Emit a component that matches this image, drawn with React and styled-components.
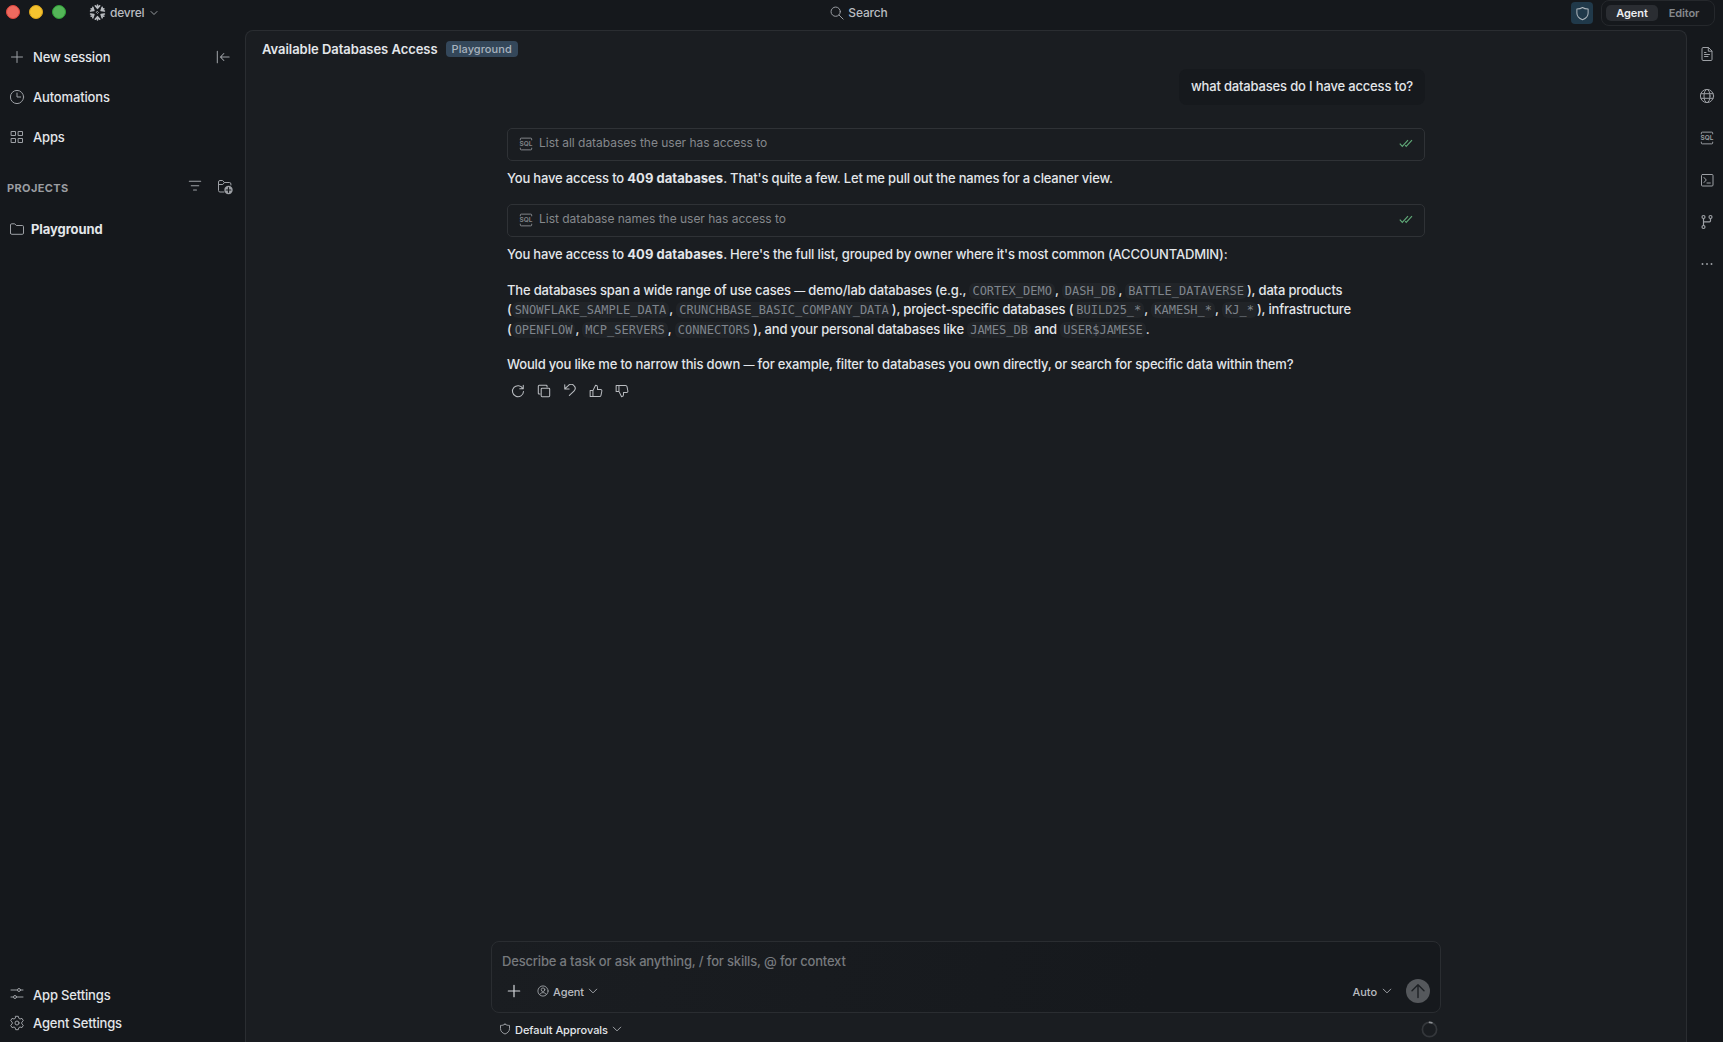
import React from 'react';
import styled, { createGlobalStyle } from 'styled-components';

const c = {
  chrome: '#15181c',
  panel: '#1a1d21',
  line: '#2a2d31',
  text: '#e3e6ea',
  soft: '#b9bcc0',
  icon: '#9da0a5',
  mute: '#85888c',
};

const Global = createGlobalStyle`
  * { box-sizing: border-box; }
  body {
    margin: 0;
    background: ${c.chrome};
    color: ${c.text};
    font-family: Inter, "Liberation Sans", sans-serif;
    font-size: 13px;
    overflow: hidden;
  }
  svg { display: block; flex: none; }
`;

const Window = styled.div`
  display: flex;
  flex-direction: column;
  width: 100vw;
  height: 100vh;
  background: ${c.chrome};
`;

const TitleBar = styled.header`
  display: grid;
  grid-template-columns: 1fr auto 1fr;
  align-items: start;
  height: 30px;
  flex: none;
`;

const TitleLeft = styled.div`
  display: flex;
  align-items: center;
  height: 25px;
  padding-left: 6px;
`;

const Lights = styled.div`
  display: flex;
  gap: 9px;
  margin: 0 23px 1px 0;
`;

const Light = styled.span`
  width: 14px;
  height: 14px;
  border-radius: 50%;
  background: ${p => p.$fill};
  border: 1px solid ${p => p.$edge};
`;

const Workspace = styled.button`
  display: flex;
  align-items: center;
  padding: 0;
  border: 0;
  background: none;
  color: ${c.soft};
  font: 500 12px/16px Inter, sans-serif;
  letter-spacing: -0.2px;
  span { margin: 0 6px 0 4px; }
`;

const Search = styled.div`
  display: flex;
  align-items: center;
  gap: 4px;
  height: 25px;
  padding-right: 5px;
  color: ${c.soft};
  font-size: 12px;
  font-weight: 500;
  letter-spacing: -0.15px;
  svg { color: ${c.icon}; }
`;

const TitleRight = styled.div`
  display: flex;
  justify-content: flex-end;
  gap: 8px;
  padding-right: 8px;
`;

const ShieldButton = styled.button`
  display: flex;
  align-items: center;
  justify-content: center;
  width: 22px;
  height: 22px;
  margin-top: 2px;
  padding: 0;
  border: 0;
  border-radius: 4px;
  background: #20394a;
  color: #aab3ba;
`;

const Toggle = styled.div`
  display: flex;
  width: 114px;
  height: 26px;
  padding: 4px;
  border: 1px solid #25282c;
  border-radius: 8px;
`;

const ToggleItem = styled.button`
  width: 52px;
  height: 16px;
  padding: 0;
  border: 0;
  border-radius: 5px;
  background: ${p => (p.$on ? '#2a2d32' : 'transparent')};
  color: ${p => (p.$on ? '#eceef1' : c.mute)};
  font: 600 11px/17px Inter, sans-serif;
  letter-spacing: -0.1px;
`;

const Body = styled.div`
  display: flex;
  flex: 1;
  min-height: 0;
`;

const Sidebar = styled.aside`
  display: flex;
  flex-direction: column;
  width: 245px;
  flex: none;
  padding: 7px 12px 5px 9px;
`;

const NavRow = styled.div`
  display: flex;
  align-items: center;
  gap: ${p => p.$gap || 8}px;
  height: ${p => p.$h || 40}px;
  color: ${c.icon};
`;

const NavLabel = styled.span`
  flex: 1;
  color: ${c.text};
  font-weight: ${p => (p.$bold ? 700 : 500)};
  letter-spacing: ${p => (p.$bold ? -0.08 : -0.16)}px;
  line-height: 18px;
`;

const CollapseSlot = styled.span`
  margin-right: 3px;
`;

const SectionRow = styled.div`
  display: flex;
  align-items: center;
  gap: 15px;
  height: 20px;
  margin: 20px 0 12px -2px;
  color: ${c.icon};
`;

const SectionTitle = styled.h2`
  flex: 1;
  margin: 2px 0 0;
  color: #9a9da1;
  font-size: 11px;
  font-weight: 700;
  letter-spacing: 0.38px;
`;

const Spacer = styled.div`
  flex: 1;
`;

const Panel = styled.main`
  display: flex;
  flex-direction: column;
  flex: 1;
  min-width: 0;
  border: 1px solid ${c.line};
  border-bottom: 0;
  border-radius: 8px 8px 0 0;
  background: ${c.panel};
`;

const PanelHeader = styled.div`
  display: flex;
  align-items: center;
  gap: 8px;
  height: 36px;
  flex: none;
  padding-left: 16px;
`;

const PanelTitle = styled.h1`
  margin: 0;
  color: ${c.text};
  font-size: 13px;
  font-weight: 600;
  letter-spacing: -0.04px;
`;

const Badge = styled.span`
  height: 16px;
  padding: 0 6px;
  border-radius: 4px;
  background: #34475a;
  color: #a9b3be;
  font-size: 11px;
  font-weight: 500;
  letter-spacing: 0.06px;
  line-height: 16px;
`;

const Thread = styled.section`
  display: flex;
  flex-direction: column;
  width: 918px;
  margin: 2px auto 0;
`;

const UserBubble = styled.div`
  align-self: flex-end;
  height: 36px;
  padding: 0 12px;
  border-radius: 8px;
  background: #16191d;
  font-weight: 500;
  letter-spacing: -0.17px;
  line-height: 35px;
  margin-bottom: 23px;
`;

const ToolCard = styled.div`
  display: flex;
  align-items: center;
  gap: 6px;
  height: 33px;
  padding: 0 11px;
  border: 1px solid #2f3236;
  border-radius: 5px;
  color: ${c.mute};
  font-size: 12px;
  letter-spacing: -0.02px;
  line-height: 16px;
`;

const ToolIcon = styled.span`
  margin-top: -1px;
`;

const ToolName = styled.span`
  flex: 1;
  margin-top: -3px;
`;

const CheckSlot = styled.span`
  color: #5fa777;
  margin-top: -3px;
`;

const Paragraph = styled.p`
  margin: ${p => p.$top}px 0 ${p => p.$bottom}px;
  white-space: nowrap;
  font-weight: 450;
  letter-spacing: -0.17px;
  line-height: 19.5px;
  strong {
    font-weight: 700;
    letter-spacing: 0.04px;
  }
`;

const Dash = styled.span`
  font-size: 11px;
  line-height: 1;
`;

const Code = styled.code`
  padding: 1px 3px;
  border-radius: 6px;
  background: #212428;
  color: #7f858d;
  font-family: "DejaVu Sans Mono", monospace;
  font-size: 12px;
  letter-spacing: 0;
  line-height: 1;
`;

const Actions = styled.div`
  display: flex;
  gap: 12px;
  margin: 9px 0 0 4px;
  color: ${c.soft};
`;

const Dock = styled.footer`
  width: 950px;
  margin: 0 auto;
  padding-bottom: 4px;
`;

const Composer = styled.div`
  height: 72px;
  padding: 11px 10px 0;
  border: 1px solid ${c.line};
  border-radius: 8px;
  background: linear-gradient(100deg, #1a1d21 0%, #16191d 70%);
`;

const Placeholder = styled.div`
  height: 18px;
  color: #76797d;
  font-weight: 450;
  letter-spacing: -0.17px;
  line-height: 16px;
`;

const ComposerBar = styled.div`
  display: flex;
  align-items: center;
  height: 24px;
  margin-top: 8px;
  color: #d2d5d9;
  padding: 0 0 0 5px;
`;

const Pick = styled.span`
  display: flex;
  align-items: center;
  gap: ${p => p.$gap || 4}px;
  margin: ${p => p.$m || 0};
  color: ${p => (p.$bright ? c.text : c.soft)};
  font-size: 11px;
  font-weight: 500;
  letter-spacing: -0.06px;
  line-height: 16px;
  svg { color: ${c.icon}; margin-bottom: 2px; }
`;

const Send = styled.button`
  display: flex;
  align-items: center;
  justify-content: center;
  width: 24px;
  height: 24px;
  margin-left: 14px;
  padding: 0;
  border: 0;
  border-radius: 50%;
  background: #55585c;
  color: #1d2024;
`;

const DockStatus = styled.div`
  display: flex;
  align-items: center;
  justify-content: space-between;
  height: 17px;
  margin-top: 8px;
  padding: 0 3px 0 8px;
`;

const Rail = styled.nav`
  display: flex;
  flex-direction: column;
  align-items: center;
  gap: 26px;
  width: 36px;
  flex: none;
  padding: 16px 0 0 4px;
  color: ${c.icon};
`;

const RailSlot = styled.span`
  display: flex;
  align-items: center;
  justify-content: center;
  width: 16px;
  height: 16px;
`;

function Icon({ s = 16, w = 1, children }) {
  return (
    <svg width={s} height={s} viewBox="0 0 16 16" fill="none" stroke="currentColor"
      strokeWidth={w} strokeLinecap="round" strokeLinejoin="round">{children}</svg>
  );
}

const Chevron = ({ s = 10 }) => <Icon s={s} w={1.6}><path d="M2 5l6 6 6-6" /></Icon>;
const Shield = ({ s = 16, w = 1.1 }) => (
  <Icon s={s} w={w}><path d="M8 1.6C9.8 2.9 11.8 3.2 14 3.2V7.5c0 3.5-2.3 5.8-6 7.2-3.7-1.4-6-3.7-6-7.2V3.2c2.2 0 4.2-.3 6-1.6z" /></Icon>
);

const SqlText = styled.text`
  font-family: Inter, sans-serif;
  font-size: 7.4px;
  font-weight: 600;
  letter-spacing: 0;
`;

const Sql = () => (
  <Icon s={14} w={1.1}>
    <path d="M1.500 3.300V2.300a1 1 0 0 1 1-1h11a1 1 0 0 1 1 1v1M1.500 12.700v1a1 1 0 0 0 1 1h11a1 1 0 0 0 1-1v-1" />
    <SqlText x="8" y="10.700" textAnchor="middle" fill="currentColor" stroke="none">SQL</SqlText>
  </Icon>
);

const Snowflake = () => (
  <svg width="17" height="17" viewBox="-8.5 -8.5 17 17" fill="none" stroke="currentColor" strokeWidth="1.6" strokeLinecap="round" strokeLinejoin="round">
    {[0, 60, 120, 180, 240, 300].map(a => (
      <path key={a} transform={`rotate(${a})`} d="M0-7.400V-4.200M-2.200-6.700L0-4.200 2.200-6.700" />
    ))}
    <path d="M0-1L1 0 0 1-1 0z" strokeWidth="0.8" />
  </svg>
);

const DoubleCheck = () => (
  <svg width="14" height="9" viewBox="0 0 14 9" fill="none" stroke="currentColor" strokeWidth="1.2">
    <path d="M.8 4.700l2.500 2.600L9 1.200M6.200 6.200l1 1.100L13 1.200" />
  </svg>
);

const Thumb = ({ down }) => (
  <Icon s={14} w={1.15}>
    <g transform={down ? 'matrix(1 0 0 -1 0 16)' : undefined}>
      <path d="M1.300 7.300h3.200v7H1.300zM4.500 7.600L7.500 1.400c1.500 0 2.200 1 2.200 2.200v2.700h3.600c1 0 1.600.8 1.400 1.700l-1 5c-.2.8-.8 1.300-1.600 1.300H4.500" />
    </g>
  </Icon>
);

const Bold = () => <strong>409 databases</strong>;

function App() {
  return (
    <Window>
      <Global />
      <TitleBar>
        <TitleLeft>
          <Lights>
            <Light $fill="#ee6a5f" $edge="#e0483e" />
            <Light $fill="#f5c32f" $edge="#dda61d" />
            <Light $fill="#54b658" $edge="#2fa037" />
          </Lights>
          <Workspace>
            <Snowflake />
            <span>devrel</span>
            <Chevron s={8} />
          </Workspace>
        </TitleLeft>
        <Search>
          <Icon s={14} w={1.1}><circle cx="6.500" cy="6.500" r="5.300" /><path d="M10.400 10.400l4.600 4.600" /></Icon>
          Search
        </Search>
        <TitleRight>
          <ShieldButton><Shield s={15} /></ShieldButton>
          <Toggle>
            <ToggleItem $on>Agent</ToggleItem>
            <ToggleItem>Editor</ToggleItem>
          </Toggle>
        </TitleRight>
      </TitleBar>

      <Body>
        <Sidebar>
          <NavRow>
            <Icon><path d="M8 2.500v11M2.500 8h11" /></Icon>
            <NavLabel>New session</NavLabel>
            <CollapseSlot>
              <Icon s={14} w={1.2}><path d="M1.500 1.500v13M15 8H5M9 4L5 8l4 4" /></Icon>
            </CollapseSlot>
          </NavRow>
          <NavRow>
            <Icon><circle cx="8" cy="8" r="6.600" /><path d="M8 4v4h3.700" /></Icon>
            <NavLabel>Automations</NavLabel>
          </NavRow>
          <NavRow>
            <Icon>
              <path d="M2.500 2.500h4v4h-4zM9.500 2.500h4v4h-4zM2.500 9.500h4v4h-4zM9.500 9.500h4v4h-4z" />
            </Icon>
            <NavLabel>Apps</NavLabel>
          </NavRow>
          <SectionRow>
            <SectionTitle>PROJECTS</SectionTitle>
            <Icon s={14} w={1.2}><path d="M1.500 1.500h13M3.700 6.500h8.600M6.300 11.500h3.400" /></Icon>
            <Icon>
              <path d="M7 13H3a1.500 1.500 0 0 1-1.500-1.500V3A1.500 1.500 0 0 1 3 1.500h2.600L7.400 3.500h5A1.500 1.500 0 0 1 13.900 5v1M1.500 5.500h4.300l1.600-2" />
              <circle cx="11.500" cy="11" r="4.200" fill="currentColor" stroke="none" />
              <path d="M11.500 8.700v4.600M9.200 11h4.600" stroke={c.chrome} strokeWidth="1.2" />
            </Icon>
          </SectionRow>
          <NavRow $gap={6}>
            <Icon><path d="M1.500 12.100V4a1.200 1.200 0 0 1 1.200-1.200h3l1.600 1.700h6a1.200 1.200 0 0 1 1.200 1.200v6.400a1.200 1.200 0 0 1-1.200 1.200H2.700a1.200 1.200 0 0 1-1.200-1.200z" /></Icon>
            <NavLabel $bold>Playground</NavLabel>
          </NavRow>
          <Spacer />
          <NavRow $h={28}>
            <Icon><path d="M2 3h6.500M11.500 3H14M2 10h2.500M7.500 10H14" /><circle cx="10" cy="3" r="1.500" /><circle cx="6" cy="10" r="1.500" /></Icon>
            <NavLabel>App Settings</NavLabel>
          </NavRow>
          <NavRow $h={28}>
            <Icon>
              <circle cx="8" cy="8" r="2" />
              <path d="M6.700 1.300h2.600l.5 2 1.200.7 2-.6 1.300 2.300-1.500 1.400v1.800l1.500 1.400-1.300 2.300-2-.6-1.200.7-.5 2H6.700l-.5-2-1.200-.7-2 .6-1.300-2.300 1.500-1.400V7.100L1.700 5.700 3 3.400l2 .6 1.200-.7z" />
            </Icon>
            <NavLabel>Agent Settings</NavLabel>
          </NavRow>
        </Sidebar>

        <Panel>
          <PanelHeader>
            <PanelTitle>Available Databases Access</PanelTitle>
            <Badge>Playground</Badge>
          </PanelHeader>

          <Thread>
            <UserBubble>what databases do I have access to?</UserBubble>
            <ToolCard>
              <ToolIcon><Sql /></ToolIcon>
              <ToolName>List all databases the user has access to</ToolName>
              <CheckSlot><DoubleCheck /></CheckSlot>
            </ToolCard>
            <Paragraph $top={7.5} $bottom={16}>
              You have access to <Bold />. That's quite a few. Let me pull out the names for a cleaner view.
            </Paragraph>
            <ToolCard>
              <ToolIcon><Sql /></ToolIcon>
              <ToolName>List database names the user has access to</ToolName>
              <CheckSlot><DoubleCheck /></CheckSlot>
            </ToolCard>
            <Paragraph $top={7.5} $bottom={16.5}>
              You have access to <Bold />. Here's the full list, grouped by owner where it's most common (ACCOUNTADMIN):
            </Paragraph>
            <Paragraph $top={0} $bottom={16}>
              The databases span a wide range of use cases <Dash>—</Dash> demo/lab databases (e.g., <Code>CORTEX_DEMO</Code>, <Code>DASH_DB</Code>, <Code>BATTLE_DATAVERSE</Code>), data products<br />
              (<Code>SNOWFLAKE_SAMPLE_DATA</Code>, <Code>CRUNCHBASE_BASIC_COMPANY_DATA</Code>), project-specific databases (<Code>BUILD25_*</Code>, <Code>KAMESH_*</Code>, <Code>KJ_*</Code>), infrastructure<br />
              (<Code>OPENFLOW</Code>, <Code>MCP_SERVERS</Code>, <Code>CONNECTORS</Code>), and your personal databases like <Code>JAMES_DB</Code> and <Code>USER$JAMESE</Code>.
            </Paragraph>
            <Paragraph $top={0} $bottom={0}>
              Would you like me to narrow this down <Dash>—</Dash> for example, filter to databases you own directly, or search for specific data within them?
            </Paragraph>
            <Actions>
              <Icon s={14} w={1.2}><path d="M13.600 5.300A6.300 6.300 0 1 0 14.300 8.500M14 1.500v4h-4" /></Icon>
              <Icon s={14} w={1.2}><path d="M3.500 11.500h-1a1 1 0 0 1-1-1v-8a1 1 0 0 1 1-1h8a1 1 0 0 1 1 1v1" /><rect x="4.800" y="4.800" width="9.700" height="9.700" rx="1" /></Icon>
              <Icon s={14} w={1.2}><path d="M2 .8v5h5M2.300 5.400L6 1.800a4.300 4.300 0 0 1 6.500 0c1.800 1.800 1.800 4.500 0 6.300L7.300 13.100" /></Icon>
              <Thumb />
              <Thumb down />
            </Actions>
          </Thread>

          <Spacer />

          <Dock>
            <Composer>
              <Placeholder>Describe a task or ask anything, / for skills, @ for context</Placeholder>
              <ComposerBar>
                <Icon s={14} w={1.4}><path d="M8 1.500v13M1.500 8h13" /></Icon>
                <Pick $m="1px 0 0 16px" $gap={4}>
                  <Icon s={12} w={1.2}><circle cx="8" cy="8" r="6.800" /><circle cx="8" cy="6.300" r="2.400" /><path d="M3.600 12.600c1-1.800 2.600-2.400 4.400-2.400s3.400.6 4.400 2.400" /></Icon>
                  Agent
                  <Chevron />
                </Pick>
                <Spacer />
                <Pick $m="1px 0 0" $gap={5}>Auto <Chevron /></Pick>
                <Send><Icon s={16} w={1.4}><path d="M8 14.500V1.800M2 7.800l6-6 6 6" /></Icon></Send>
              </ComposerBar>
            </Composer>
            <DockStatus>
              <Pick $bright>
                <Shield s={12} w={1.3} />
                Default Approvals
                <Chevron />
              </Pick>
              <Icon s={17} w={1.6}>
                <circle cx="8" cy="8" r="6.700" stroke="#34373b" />
                <path d="M8 1.300a6.700 6.700 0 0 1 2.200.4" stroke="#8d9094" />
              </Icon>
            </DockStatus>
          </Dock>
        </Panel>

        <Rail>
          <Icon><path d="M3 2.500a1 1 0 0 1 1-1h5.500L13 5v8.500a1 1 0 0 1-1 1H4a1 1 0 0 1-1-1zM9.300 1.700v3.500h3.500M5.500 8.500h5M5.500 10.500h3.500M5.500 6.500h1.500" /></Icon>
          <Icon><circle cx="8" cy="8" r="6.600" /><ellipse cx="8" cy="8" rx="3" ry="6.600" /><path d="M2 5.700h12M2 10.300h12" /></Icon>
          <RailSlot><Sql /></RailSlot>
          <Icon><rect x="2.500" y="2.500" width="11.500" height="11.500" rx="1" /><path d="M5 5.500L7.300 8 5 10.500M8 11h3.300" /></Icon>
          <Icon w={1.2}><circle cx="4.500" cy="3" r="1.500" /><circle cx="11.500" cy="3" r="1.500" /><circle cx="4.500" cy="13" r="1.500" /><path d="M4.500 4.500v7M11.500 4.500v2.300a1 1 0 0 1-1 1h-6" /></Icon>
          <Icon><path d="M3.500 8h.01M8 8h.01M12.500 8h.01" strokeWidth="1.9" /></Icon>
        </Rail>
      </Body>
    </Window>
  );
}

export default App;
